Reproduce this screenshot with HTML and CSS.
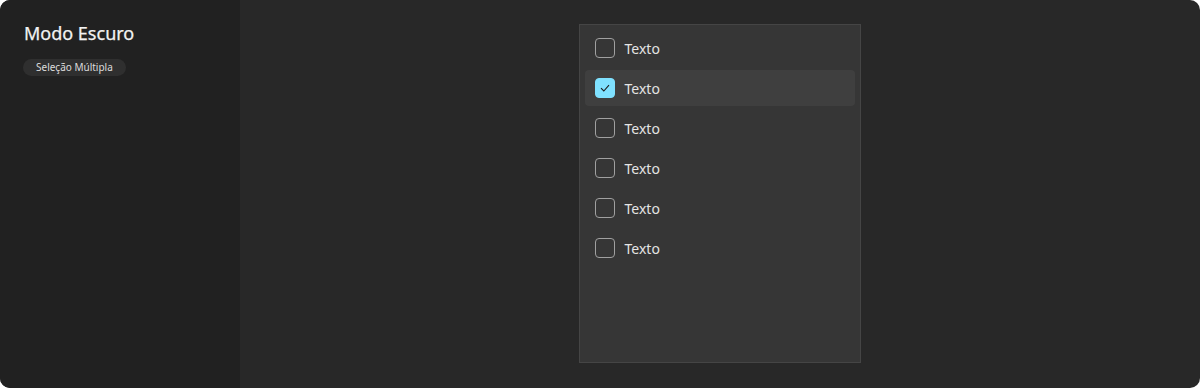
FILE: index.html
```html
<!DOCTYPE html>
<html lang="pt">
<head>
    <meta charset="UTF-8">
    <meta name="viewport" content="width=device-width, initial-scale=1.0">
    <title>Modo Escuro - Seleção Múltipla</title>
    <link rel="stylesheet" href="styles.css">
</head>
<body>
    <div class="frame">
        <aside class="sidebar">
            <h1 class="title">Modo Escuro</h1>
            <span class="tag">Seleção Múltipla</span>
        </aside>

        <main class="stage">
            <div class="list">
                <label class="option">
                    <span class="box"></span>
                    Texto
                </label>
                <label class="option selected">
                    <span class="box checked">
                        <svg width="10" height="8" viewBox="0 0 10 8"><path d="M1 4.2 L3.8 7 L9 1.2" fill="none" stroke="#1c1c1c" stroke-width="1.1"/></svg>
                    </span>
                    Texto
                </label>
                <label class="option">
                    <span class="box"></span>
                    Texto
                </label>
                <label class="option">
                    <span class="box"></span>
                    Texto
                </label>
                <label class="option">
                    <span class="box"></span>
                    Texto
                </label>
                <label class="option">
                    <span class="box"></span>
                    Texto
                </label>
            </div>
        </main>
    </div>
</body>
</html>
```

FILE: styles.css
```css
body {
    margin: 0;
    background: #fff;
    font-family: 'Noto Sans', sans-serif;
}
.frame {
    display: flex;
    height: 388px;
    border-radius: 10px;
    overflow: hidden;
    background: #282828;
}
.sidebar {
    width: 240px;
    flex: 0 0 240px;
    background: #212121;
    padding: 20px 23px;
    box-sizing: border-box;
}
.title {
    margin: 0 0 8px 1px;
    font-size: 18px;
    font-weight: 400;
    line-height: 26px;
    color: #f2f2f2;
    -webkit-text-stroke: 0.25px #f2f2f2;
}
.tag {
    display: inline-block;
    height: 17px;
    line-height: 17px;
    padding: 0 13px;
    border-radius: 9px;
    background: #2f2f2f;
    color: #dcdcdc;
    font-size: 10px;
}
.stage {
    flex: 1;
    display: flex;
    justify-content: center;
    padding-top: 24px;
    padding-right: 1px;
}
.list {
    width: 282px;
    height: 339px;
    box-sizing: border-box;
    background: #363636;
    border: 1px solid #454545;
    padding: 5px;
    display: flex;
    flex-direction: column;
    gap: 4px;
}
.option {
    display: flex;
    align-items: center;
    gap: 10px;
    height: 36px;
    padding: 0 10px;
    border-radius: 4px;
    color: #e4e4e4;
    font-size: 14px;
    cursor: pointer;
}
.option.selected {
    background: #3f3f3f;
}
.box {
    width: 20px;
    height: 20px;
    box-sizing: border-box;
    border: 1px solid #a0a0a0;
    border-radius: 4px;
    display: flex;
    align-items: center;
    justify-content: center;
}
.box.checked {
    background: #7fe1ff;
    border-color: #7fe1ff;
}
```
